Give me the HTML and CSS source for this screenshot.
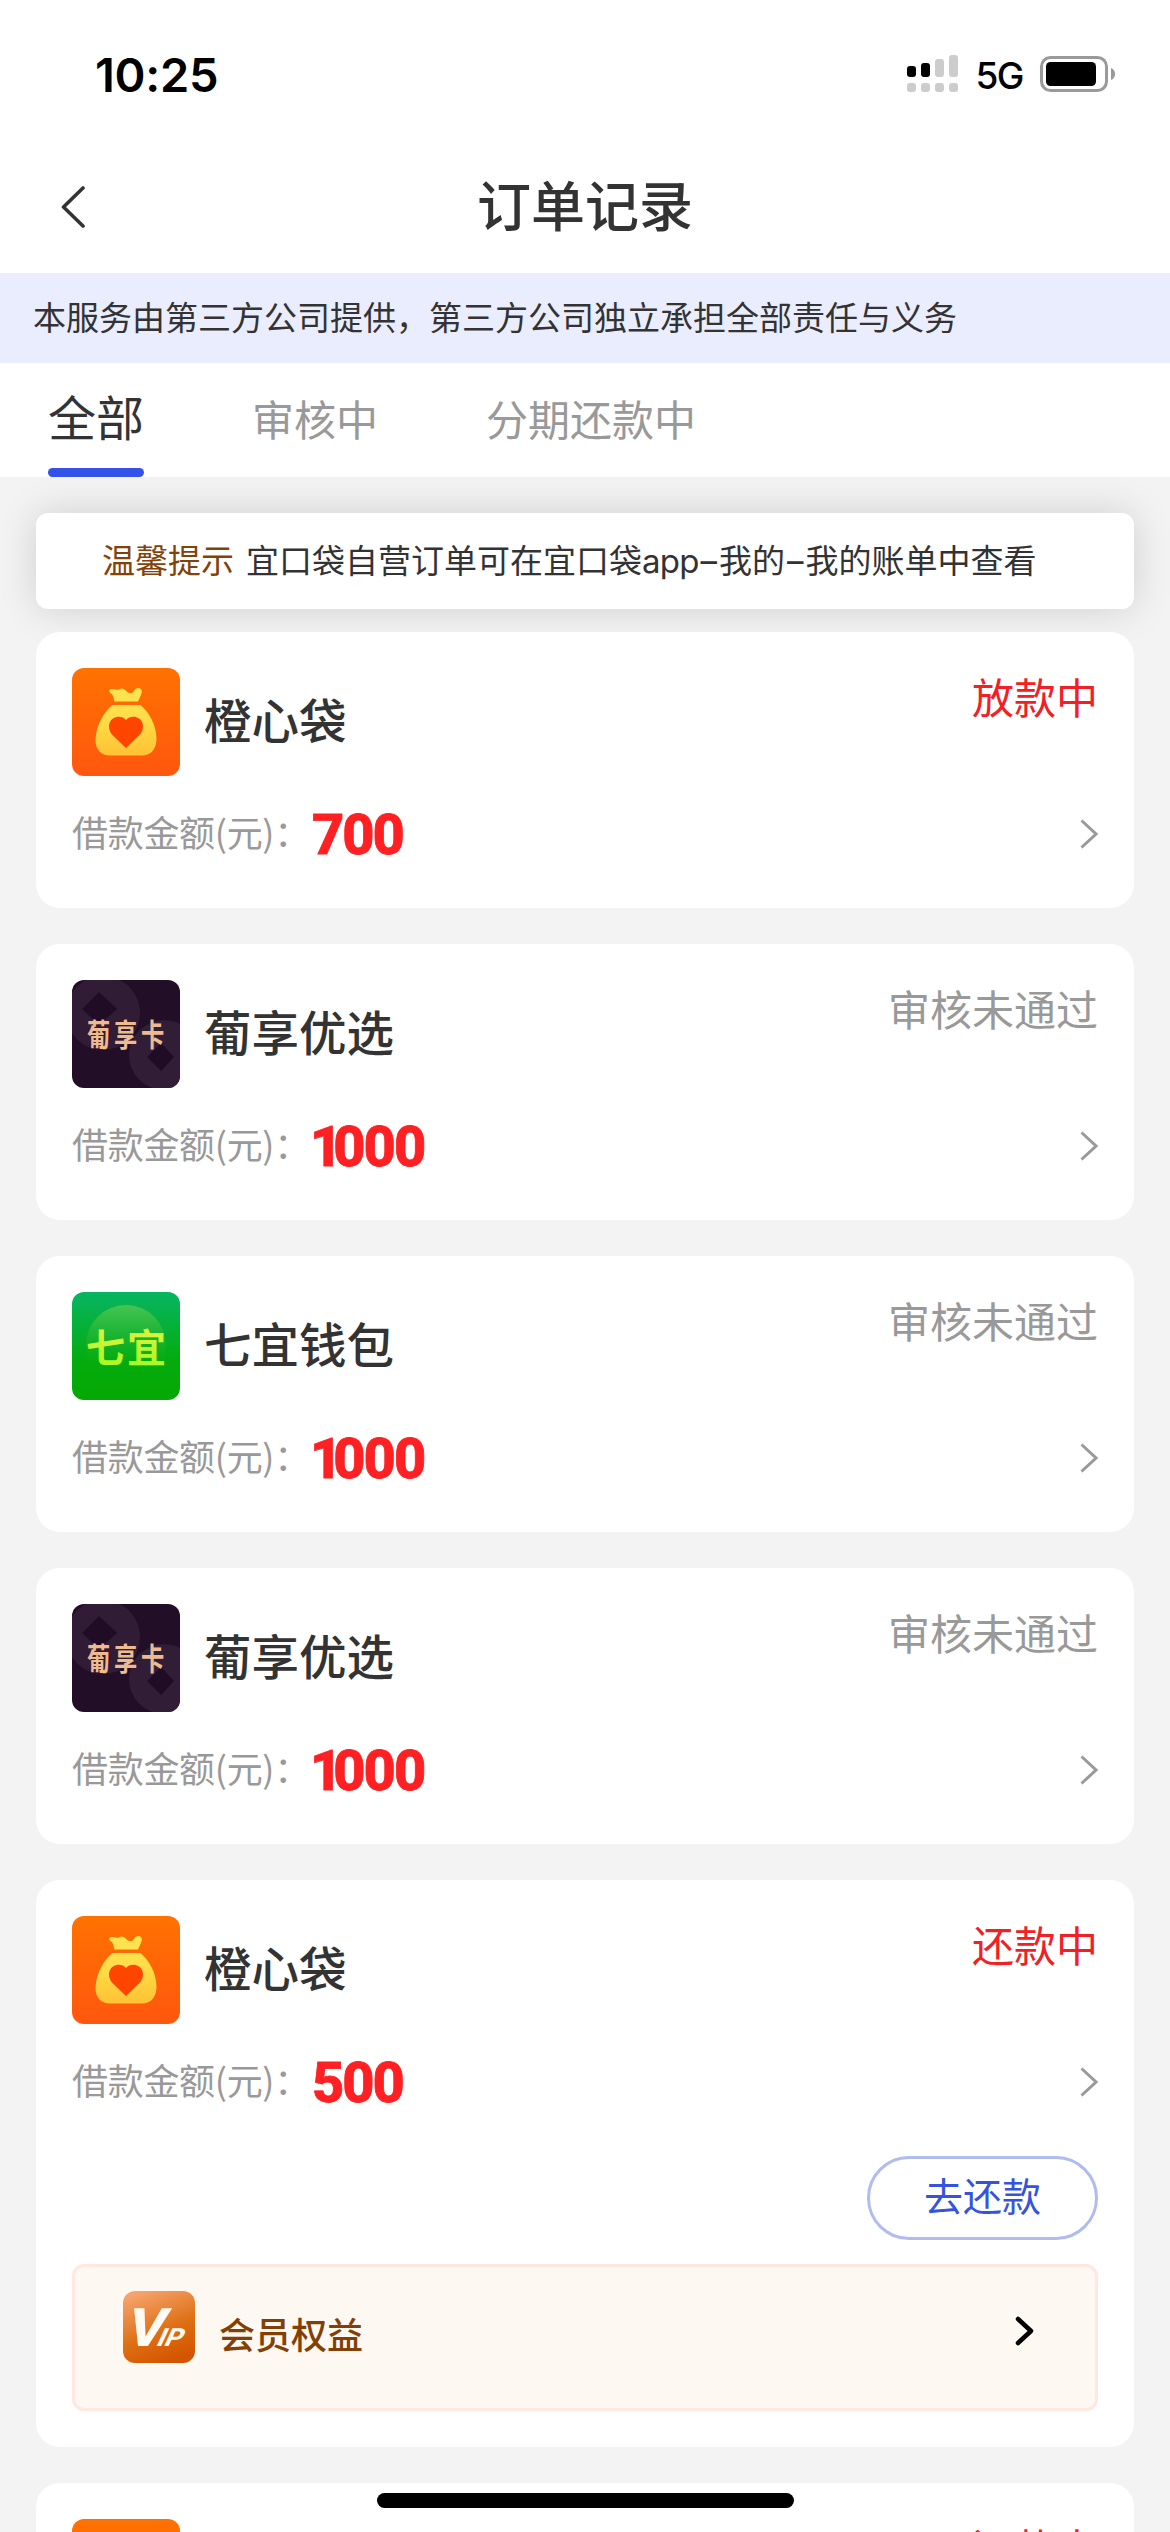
FILE: index.html
```html
<!DOCTYPE html>
<html lang="zh-CN">
<head>
<meta charset="utf-8">
<title>订单记录</title>
<link rel="stylesheet" href="styles.css">
</head>
<body>
<svg class="defs" width="0" height="0" aria-hidden="true">
  <defs>
    <linearGradient id="bagBg" x1="0" y1="0" x2="0" y2="1"><stop offset="0" stop-color="#ff7200"/><stop offset="1" stop-color="#ff570f"/></linearGradient>
    <linearGradient id="bagFill" x1="0" y1="0" x2="0" y2="1"><stop offset="0" stop-color="#ffe452"/><stop offset=".5" stop-color="#ffdc46"/><stop offset="1" stop-color="#ffc235"/></linearGradient>
    <linearGradient id="greenBg" x1="0" y1="0" x2="0" y2="1"><stop offset="0" stop-color="#07b562"/><stop offset=".65" stop-color="#04ab0c"/><stop offset="1" stop-color="#04a904"/></linearGradient>
    <linearGradient id="greenBall" x1="0" y1="0" x2="0" y2="1"><stop offset="0" stop-color="#48c452"/><stop offset=".8" stop-color="#12ae14" stop-opacity="0"/></linearGradient>
    <linearGradient id="lime" x1="0" y1="0" x2="0" y2="1"><stop offset="0" stop-color="#f0f047"/><stop offset="1" stop-color="#9dfb1c"/></linearGradient>
    <linearGradient id="vipBg" x1=".2" y1="0" x2=".6" y2="1"><stop offset="0" stop-color="#f6a56f"/><stop offset=".6" stop-color="#de6f14"/><stop offset="1" stop-color="#d45500"/></linearGradient>
  </defs>
  <symbol id="bag" viewBox="0 0 108 108">
    <rect width="108" height="108" fill="url(#bagBg)"/>
    <path fill="url(#bagFill)" d="M38 21.500C41 20 44.500 23.500 49 20.500C53 19.500 55 26 59.500 25C62.500 24.500 62 20 66.500 20C70.500 20.500 70.500 24 68.500 28L66 33.500H42.500L41 28C40.500 25.500 35 24 38 21.500ZM40.500 37H68.500C77 44 84.500 57 84.500 71C84.500 81 79 87.500 70 87.500H38C29.500 87.500 23.500 82 23.500 72C24 58 31.500 44 40.500 37Z"/>
    <path fill="#ff4500" d="M54 80L40.500 67C36 62.500 35.500 54 41 50.500C46 47.500 51 49 54 52C57 49 62 47.500 67 50.500C72.500 54 72 62.500 67.500 67Z"/>
  </symbol>
  <symbol id="grape" viewBox="0 0 108 108">
    <rect width="108" height="108" fill="#220e26"/>
    <circle cx="31" cy="33" r="37" fill="#301c35"/>
    <path fill="#200c25" d="M27 12L45 29L27 45L10 29Z"/>
    <circle cx="92" cy="75" r="35" fill="#321d36"/>
    <path fill="#200c25" d="M89 63L102 77L89 91L75 77Z"/>
  </symbol>
  <symbol id="seven" viewBox="0 0 108 108">
    <rect width="108" height="108" fill="url(#greenBg)"/>
    <circle cx="54" cy="53" r="40" fill="url(#greenBall)"/>
  </symbol>
  <symbol id="arrow" viewBox="0 0 18 30"><path d="M1.500 1.500L16 15L1.500 28.500" fill="none" stroke="#999" stroke-width="3"/></symbol>
</svg>

<header class="status-bar">
  <span class="clock">10:25</span>
  <div class="status-right">
    <svg class="signal" width="52" height="38" viewBox="0 0 52 38">
      <rect x="0" y="11" width="9" height="11" rx="3"/><rect x="14" y="8" width="9" height="14" rx="3"/>
      <g fill="#ccc"><rect x="28" y="4" width="9" height="18" rx="3"/><rect x="42" y="0" width="9" height="22" rx="3"/>
      <rect x="0" y="28" width="9" height="9" rx="3"/><rect x="14" y="28" width="9" height="9" rx="3"/><rect x="28" y="28" width="9" height="9" rx="3"/><rect x="42" y="28" width="9" height="9" rx="3"/></g>
    </svg>
    <span class="network">5G</span>
    <svg class="battery" width="76" height="36" viewBox="0 0 76 36">
      <rect x="1.500" y="1.500" width="65" height="33" rx="9" fill="none" stroke="#9a9a9a" stroke-width="3"/>
      <rect x="6" y="6" width="50" height="24" rx="4.500"/>
      <path d="M71 12C76.500 14 76.500 22 71 24Z" fill="#999"/>
    </svg>
  </div>
</header>
<nav class="navbar">
  <svg class="back" width="24" height="42" viewBox="0 0 24 42"><path d="M22 2L2.500 21L22 40" fill="none" stroke="#333" stroke-width="3.600" stroke-linecap="round" stroke-linejoin="round"/></svg>
  <h1 class="page-title">订单记录</h1>
</nav>
<div class="notice">本服务由第三方公司提供，第三方公司独立承担全部责任与义务</div>
<div class="tabs">
  <span class="tab active">全部</span>
  <span class="tab">审核中</span>
  <span class="tab">分期还款中</span>
</div>
<main class="content">
  <div class="tip"><span class="tip-label">温馨提示</span><span class="tip-text">宜口袋自营订单可在宜口袋<span class="latin">app</span><span class="dash">–</span>我的<span class="dash">–</span>我的账单中查看</span></div>

  <section class="card">
    <div class="card-head"><svg class="logo"><use href="#bag"/></svg><h2 class="name">橙心袋</h2><span class="state red">放款中</span></div>
    <div class="amount-row"><span class="label">借款金额(元)：</span><span class="amount">700</span><svg class="arrow"><use href="#arrow"/></svg></div>
  </section>
  <section class="card">
    <div class="card-head"><svg class="logo"><use href="#grape"/><text x="20" y="66" class="logo-grape" transform="scale(.75 1)">葡享卡</text></svg><h2 class="name">葡享优选</h2><span class="state">审核未通过</span></div>
    <div class="amount-row"><span class="label">借款金额(元)：</span><span class="amount"><span class="one">1</span>000</span><svg class="arrow"><use href="#arrow"/></svg></div>
  </section>
  <section class="card">
    <div class="card-head"><svg class="logo"><use href="#seven"/><text x="14" y="70" class="logo-seven" textLength="80">七宜</text></svg><h2 class="name">七宜钱包</h2><span class="state">审核未通过</span></div>
    <div class="amount-row"><span class="label">借款金额(元)：</span><span class="amount"><span class="one">1</span>000</span><svg class="arrow"><use href="#arrow"/></svg></div>
  </section>
  <section class="card">
    <div class="card-head"><svg class="logo"><use href="#grape"/><text x="20" y="66" class="logo-grape" transform="scale(.75 1)">葡享卡</text></svg><h2 class="name">葡享优选</h2><span class="state">审核未通过</span></div>
    <div class="amount-row"><span class="label">借款金额(元)：</span><span class="amount"><span class="one">1</span>000</span><svg class="arrow"><use href="#arrow"/></svg></div>
  </section>
  <section class="card card-tall">
    <div class="card-head"><svg class="logo"><use href="#bag"/></svg><h2 class="name">橙心袋</h2><span class="state red">还款中</span></div>
    <div class="amount-row"><span class="label">借款金额(元)：</span><span class="amount">500</span><svg class="arrow"><use href="#arrow"/></svg></div>
    <button class="repay">去还款</button>
    <div class="vip">
      <svg class="vip-icon" viewBox="0 0 72 72">
        <rect width="72" height="72" rx="12" fill="url(#vipBg)"/>
        <text class="vip-mark" transform="translate(1 55) skewX(-15)"><tspan class="vip-v" textLength="38" lengthAdjust="spacingAndGlyphs">V</tspan></text>
        <text class="vip-mark" transform="translate(32 55) skewX(-25)"><tspan class="vip-ip" textLength="25" lengthAdjust="spacingAndGlyphs">IP</tspan></text>
      </svg>
      <span class="vip-text">会员权益</span>
      <svg class="vip-arrow" width="20" height="30" viewBox="0 0 20 30"><path d="M3 3L16 15L3 27" fill="none" stroke="#000" stroke-width="4.500" stroke-linecap="round" stroke-linejoin="round"/></svg>
    </div>
  </section>
  <section class="card">
    <div class="card-head"><svg class="logo"><use href="#bag"/></svg><span class="state red">还款中</span></div>
  </section>
</main>
<div class="home-indicator"></div>
</body>
</html>
```
FILE: styles.css
```css
* { box-sizing: border-box; }
html { height: 2532px; overflow: hidden; }
body {
  position: relative;
  width: 1170px;
  height: 2532px;
  margin: 0;
  overflow: hidden;
  background: #fff;
  color: #333;
  font-family: "Noto Sans CJK SC", sans-serif;
}
h1, h2 { margin: 0; }
svg { display: block; flex: none; }
.defs { position: absolute; }

.status-bar {
  display: flex;
  justify-content: space-between;
  align-items: center;
  height: 148px;
  padding: 0 54px 0 95px;
  color: #000;
  font-family: Inter, sans-serif;
}
.clock { font-size: 47px; font-weight: 600; letter-spacing: -0.3px; }
.status-right { display: flex; align-items: center; }
.network { margin: 4px 17px 0 16px; font-size: 37px; font-weight: 500; line-height: 40px; letter-spacing: -1.5px; }

.navbar {
  display: grid;
  grid-template-columns: 85px 1fr 85px;
  align-items: center;
  height: 125px;
  padding-bottom: 7px;
}
.back { justify-self: end; }
.page-title { padding-bottom: 6px; text-align: center; font-size: 54px; font-weight: 500; line-height: 80px; }

.notice {
  height: 90px;
  padding-left: 33px;
  background: #eaedfd;
  font-size: 33px;
  line-height: 87px;
  white-space: nowrap;
}
.tabs {
  display: flex;
  gap: 108px;
  height: 114px;
  padding-left: 48px;
}
.tab { color: #999; font-size: 42px; line-height: 110px; }
.tab.active {
  color: #333;
  font-size: 48px;
  line-height: 104px;
  display: flex;
  flex-direction: column;
}
.tab.active::after { content: ""; flex: none; height: 9px; margin-top: 1px; border-radius: 5px; background: #3451e8; }

.content {
  display: flex;
  flex-direction: column;
  gap: 36px;
  height: 2055px;
  padding: 36px 36px 0;
  overflow: hidden;
  background: #f3f3f3;
}
.tip {
  flex: none;
  display: flex;
  gap: 12px;
  height: 96px;
  margin-bottom: -13px;
  padding-left: 66px;
  border-radius: 12px;
  background: #fff;
  box-shadow: 0 0 39px rgba(0, 0, 0, .15);
  font-size: 33px;
  line-height: 93px;
  white-space: nowrap;
}
.tip-label { color: #84420b; }
.latin { font-family: Inter, sans-serif; letter-spacing: -0.8px; }
.dash { padding: 0 2px; font-family: Inter, sans-serif; }

.card { flex: none; height: 276px; padding: 36px; border-radius: 24px; background: #fff; }
.card-tall { height: 567px; }
.card-head { display: flex; height: 108px; }
.logo { width: 108px; height: 108px; border-radius: 12px; }
.name { margin-left: 24px; font-size: 47.500px; font-weight: 500; line-height: 101px; }
.state { margin-left: auto; color: #999; font-size: 42px; line-height: 56px; }
.red { color: #f22025; }
.amount-row { display: flex; align-items: center; height: 96px; margin-top: 10px; }
.label { width: 240px; padding-bottom: 6px; color: #999; font-size: 36px; line-height: 80px; letter-spacing: -0.3px; white-space: nowrap; }
.amount {
  padding-top: 2px;
  color: #ff2023;
  font-family: Roboto, sans-serif;
  font-size: 56px;
  font-weight: 800;
  letter-spacing: -2px;
  -webkit-text-stroke: 0.8px #ff2023;
}
.one { margin-left: -2px; letter-spacing: -9px; }
.arrow { width: 18px; height: 30px; margin-left: auto; }

.repay {
  display: block;
  width: 231px;
  height: 84px;
  margin: 26px 0 24px auto;
  padding: 0 0 8px;
  border: 3px solid #b0bbf0;
  border-radius: 42px;
  background: #fff;
  color: #3553dc;
  font: 39px/70px "Noto Sans CJK SC", sans-serif;
}
.vip {
  display: flex;
  height: 147px;
  padding: 24px 60px 0 48px;
  border: 3px solid #ffe8df;
  border-radius: 12px;
  background: #fef8f2;
}
.vip-icon { width: 72px; height: 72px; }
.vip-text { margin-left: 24px; color: #824007; font-size: 36px; font-weight: 500; line-height: 84px; }
.vip-arrow { margin: 25px 0 0 auto; }

.logo-grape { fill: #eebb91; font: 700 31px "Noto Sans CJK SC", sans-serif; letter-spacing: 5px; }
.logo-seven { fill: url(#lime); font: 700 39px "Noto Sans CJK SC", sans-serif; }
.vip-mark { fill: #fffaf2; font-family: Roboto, sans-serif; }
.vip-v { font-size: 53px; font-weight: 800; }
.vip-ip { font-size: 25px; font-weight: 800; }

.home-indicator {
  position: absolute;
  left: 377px;
  bottom: 24px;
  width: 417px;
  height: 15px;
  border-radius: 8px;
  background: #000;
}
```
